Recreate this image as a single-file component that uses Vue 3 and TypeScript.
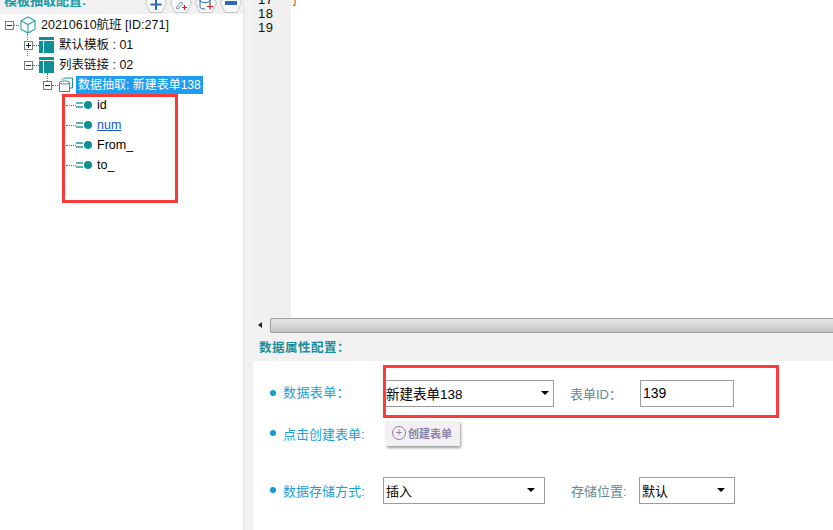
<script setup lang="ts">
const fields = [
  { name: 'id', link: false },
  { name: 'num', link: true },
  { name: 'From_', link: false },
  { name: 'to_', link: false },
]
</script>

<template>
  <div class="page">
    <aside class="side">
      <header class="side-head">
        <span class="side-title">模板抽取配置:</span>
        <div class="tools">
          <svg viewBox="0 0 22 20" width="22" height="20"><path d="M5 .5h12l4.500 9.500-4.500 9.500H5L.5 10z" fill="#f8f8f8" stroke="#c4c4c4"/><path d="M11 6v11M5.500 11.500h11" stroke="#2b6cb0" stroke-width="2"/></svg>
          <svg viewBox="0 0 22 20" width="22" height="20"><path d="M5 .5h12l4.500 9.500-4.500 9.500H5L.5 10z" fill="#f8f8f8" stroke="#c4c4c4"/><path d="M6 15l5-6 2 1.500-5 5.500z" fill="none" stroke="#6d8fb5"/><path d="M12 14.500h5M14.500 12v5" stroke="#e02020" stroke-width="1.200"/></svg>
          <svg viewBox="0 0 22 20" width="22" height="20"><path d="M5 .5h12l4.500 9.500-4.500 9.500H5L.5 10z" fill="#f8f8f8" stroke="#c4c4c4"/><ellipse cx="10" cy="7" rx="5" ry="2.500" fill="none" stroke="#2b6cb0"/><path d="M5 7v7c0 1 2 2 5 2M15 7v4" fill="none" stroke="#2b6cb0"/><path d="M12 13.500h6M15 10.500v6" stroke="#e02020" stroke-width="1.200"/></svg>
          <svg viewBox="0 0 22 20" width="22" height="20"><path d="M5 .5h12l4.500 9.500-4.500 9.500H5L.5 10z" fill="#f8f8f8" stroke="#c4c4c4"/><path d="M5 10h12" stroke="#2b6cb0" stroke-width="4"/></svg>
        </div>
      </header>
      <div class="tree">
        <div class="row lvl0">
          <i class="box minus"></i><i class="dash"></i>
          <svg class="cube" viewBox="0 0 18 18" width="18" height="18"><path d="M9 1l7 3.800v8.400L9 17l-7-3.800V4.800zM2 4.800l7 3.800 7-3.800M9 8.600V17" fill="none" stroke="#2aa3ad" stroke-width="1.100"/></svg>
          <span class="label">20210610航班 [ID:271]</span>
          <i class="vline v0"></i>
        </div>
        <div class="row lvl1">
          <i class="box plus"></i><i class="dash short"></i>
          <svg class="tpl" viewBox="0 0 15 16" width="15" height="16"><path d="M0 0h15v3H0zM0 4h4v12H0zM5 4h10v12H5z" fill="#0f8f98"/></svg>
          <span class="label">默认模板 : 01</span>
        </div>
        <div class="row lvl1">
          <i class="box minus"></i><i class="dash short"></i>
          <svg class="tpl" viewBox="0 0 15 16" width="15" height="16"><path d="M0 0h15v3H0zM0 4h4v12H0zM5 4h10v12H5z" fill="#0f8f98"/></svg>
          <span class="label">列表链接 : 02</span>
          <i class="vline v1"></i>
        </div>
        <div class="row lvl2">
          <i class="box minus"></i><i class="dash short"></i>
          <svg class="db" viewBox="0 0 16 16" width="16" height="16"><path d="M1.500 5.500v9h10v-9c0-1-2-1.500-5-1.500s-5 .5-5 1.500zM1.500 5.500c0 1 2 1.500 5 1.500s5-.5 5-1.500M4 3c0-1 2-2 5-2h5.500v10h-2.500" fill="none" stroke="#2a8f98" stroke-width="1"/></svg>
          <span class="label selected">数据抽取: 新建表单138</span>
        </div>
        <div v-for="f in fields" :key="f.name" class="row leaf">
          <i class="dash long"></i>
          <span class="eq"></span><span class="dot"></span>
          <span class="leaf-name" :class="{ link: f.link }">{{ f.name }}</span>
        </div>
      </div>
    </aside>

    <main class="main">
      <section class="editor">
        <div class="gutter">
          <div class="ln cut">17</div>
          <div class="ln">18</div>
          <div class="ln">19</div>
        </div>
        <div class="code"><span class="brace">}</span></div>
      </section>
      <div class="scrollbar">
        <span class="arrow"></span>
        <span class="thumb"></span>
      </div>
      <h3 class="props-title">数据属性配置：</h3>
      <section class="form">
        <div class="line first">
          <span class="bullet"></span>
          <span class="key k1">数据表单：</span>
          <div class="select s1"><span>新建表单138</span><i class="caret"></i></div>
          <span class="key2 g1">表单ID：</span>
          <div class="input">139</div>
        </div>
        <div class="line second">
          <span class="bullet"></span>
          <span class="key k2">点击创建表单:</span>
          <button class="create"><i class="circle">+</i>创建表单</button>
        </div>
        <div class="line third">
          <span class="bullet"></span>
          <span class="key k2">数据存储方式:</span>
          <div class="select s2"><span>插入</span><i class="caret"></i></div>
          <span class="key2 g2">存储位置:</span>
          <div class="select s3"><span>默认</span><i class="caret"></i></div>
        </div>
      </section>
    </main>

    <div class="mark mark-a"></div>
    <div class="mark mark-b"></div>
  </div>
</template>

<style>
html, body { margin: 0; padding: 0; background: #fff; }
</style>

<style scoped>
.page {
  position: relative;
  width: 833px;
  height: 530px;
  overflow: hidden;
  display: flex;
  background: #f1f1f1;
  font-family: "Liberation Sans", "Noto Sans CJK SC", sans-serif;
  font-size: 12px;
  color: #000;
}
.side { width: 243px; flex: none; display: flex; flex-direction: column; background: #fff; border-right: 1px solid #e4e4e4; box-sizing: content-box; }
.side-head { height: 14px; background: #f1f1f1; display: flex; justify-content: space-between; position: relative; overflow: hidden; }
.side-title { position: relative; top: -7px; left: 4px; font-size: 13px; line-height: 16px; font-weight: 700; color: #1a9aa6; }
.tools { display: flex; gap: 3px; position: absolute; left: 145px; top: -7px; }
.tree { display: flex; flex-direction: column; padding-top: 1px; }
.row { height: 20px; display: flex; align-items: center; position: relative; white-space: nowrap; }
.lvl0 { padding-left: 5px; }
.lvl1 { padding-left: 24px; }
.lvl2 { padding-left: 43px; }
.leaf { padding-left: 66px; }
.box { width: 9px; height: 9px; border: 1px solid #6f8080; box-sizing: border-box; position: relative; flex: none; background: #fff; }
.box::before { content: ""; position: absolute; left: 1px; right: 1px; top: 3px; height: 1px; background: #222; }
.plus::after { content: ""; position: absolute; top: 1px; bottom: 1px; left: 3px; width: 1px; background: #222; }
.dash { width: 5px; border-top: 1px dotted #666; flex: none; }
.dash.short { width: 6px; }
.dash.long { width: 10px; }
.vline { position: absolute; border-left: 1px dotted #777; z-index: 0; }
.v0 { left: 27px; top: 19px; height: 22px; }
.v1 { left: 47px; top: 18px; height: 8px; }
.box { z-index: 1; }
.cube { margin-right: 4px; }
.tpl { margin-right: 5px; }
.db { margin-right: 2px; }
.label { line-height: 18px; font-size: 12.500px; color: #111; }
.selected { background: #1e9cf0; color: #fff; padding: 0 2px; font-size: 12px; }
.eq { width: 7px; border-top: 2px solid #5fb0b6; border-bottom: 2px solid #5fb0b6; box-sizing: border-box; height: 6px; margin-right: 1px; }
.dot { width: 8px; height: 8px; border-radius: 50%; background: #0f8f98; margin-right: 5px; }
.leaf-name { font-size: 12.500px; }
.link { color: #1558c0; text-decoration: underline; }

.main { flex: 1; min-width: 0; display: flex; flex-direction: column; padding-left: 9px; }
.editor { height: 318px; display: flex; flex: none; background: #fff; }
.gutter { width: 38px; background: #f0f0f0; padding-left: 5px; box-sizing: border-box; position: relative; }
.ln { font-size: 13px; letter-spacing: .500px; line-height: 14px; height: 14px; color: #111; }
.cut { margin-top: -7px; }
.code { flex: 1; background: #fff; position: relative; font-size: 12px; line-height: 12px; }
.brace { position: absolute; left: 2px; top: -7px; color: #d33; }
.scrollbar { height: 15px; flex: none; display: flex; align-items: stretch; background: #f1f1f1; box-sizing: border-box; }
.arrow { width: 0; height: 0; border: 3px solid transparent; border-right: 4px solid #222; border-left: 0; margin: 4px 8px 0 5px; }
.thumb { flex: 1; border: 1px solid #a0a0a0; border-right: 0; background: linear-gradient(#e6e6e6, #c4c4c4); border-radius: 2px 0 0 2px; }
.props-title { margin: 0; height: 28px; line-height: 30px; padding-left: 6px; font-size: 12.500px; font-weight: 700; color: #1a8f9c; flex: none; letter-spacing: .500px; }
.form { flex: 1; background: #fff; position: relative; }
.line { display: flex; align-items: center; position: relative; padding-left: 17px; }
.first { height: 30px; margin-top: 17px; }
.second { height: 28px; margin-top: 11px; }
.third { height: 28px; margin-top: 29px; }
.bullet { width: 6px; height: 6px; border-radius: 50%; background: #0f9bd7; flex: none; margin-right: 7px; }
.key { color: #19a0dc; font-size: 13px; position: relative; top: -2px; }
.k1 { width: 100px; letter-spacing: .400px; }
.k2 { width: 100px; }
.second .key, .third .key { top: 0; }
.key2 { color: #6a8796; font-size: 13px; }
.select {
  display: flex; align-items: center; justify-content: space-between;
  border: 1px solid #9c9c9c; box-sizing: border-box; background: #fff; height: 27px;
  font-size: 13px; flex: none;
}
.s1 { width: 171px; padding: 0 4px 0 2px; font-size: 13.500px; }
.s2 { width: 162px; padding: 0 9px 0 2px; }
.s3 { width: 96px; padding: 0 9px 0 2px; }
.g1 { margin-left: 16px; width: 70px; }
.g2 { margin-left: 26px; width: 68px; }
.caret { width: 0; height: 0; border: 4px solid transparent; border-top: 4px solid #000; border-bottom: 0; }
.input { width: 94px; height: 27px; border: 1px solid #9c9c9c; box-sizing: border-box; font-size: 14px; line-height: 25px; padding-left: 2px; }
.create {
  display: flex; align-items: center; gap: 2px; height: 25px; width: 74px; padding: 0 0 0 6px; margin: 0 0 0 3px;
  border: 0; border-radius: 1px; background: #f2f0f2; color: #8a80a8; font: 700 11px "Liberation Sans", "Noto Sans CJK SC", sans-serif;
  box-shadow: 1px 2px 3px #9a9a9a;
}
.circle { width: 12px; height: 12px; border: 1px solid #8a80a8; border-radius: 50%; font-style: normal; font-weight: 400; line-height: 11px; text-align: center; font-size: 11px; flex: none; }
.mark { position: absolute; border: 3px solid #fb3a3a; box-sizing: border-box; pointer-events: none; }
.mark-a { left: 62px; top: 94px; width: 116px; height: 109px; }
.mark-b { left: 383px; top: 365px; width: 396px; height: 53px; }
</style>
